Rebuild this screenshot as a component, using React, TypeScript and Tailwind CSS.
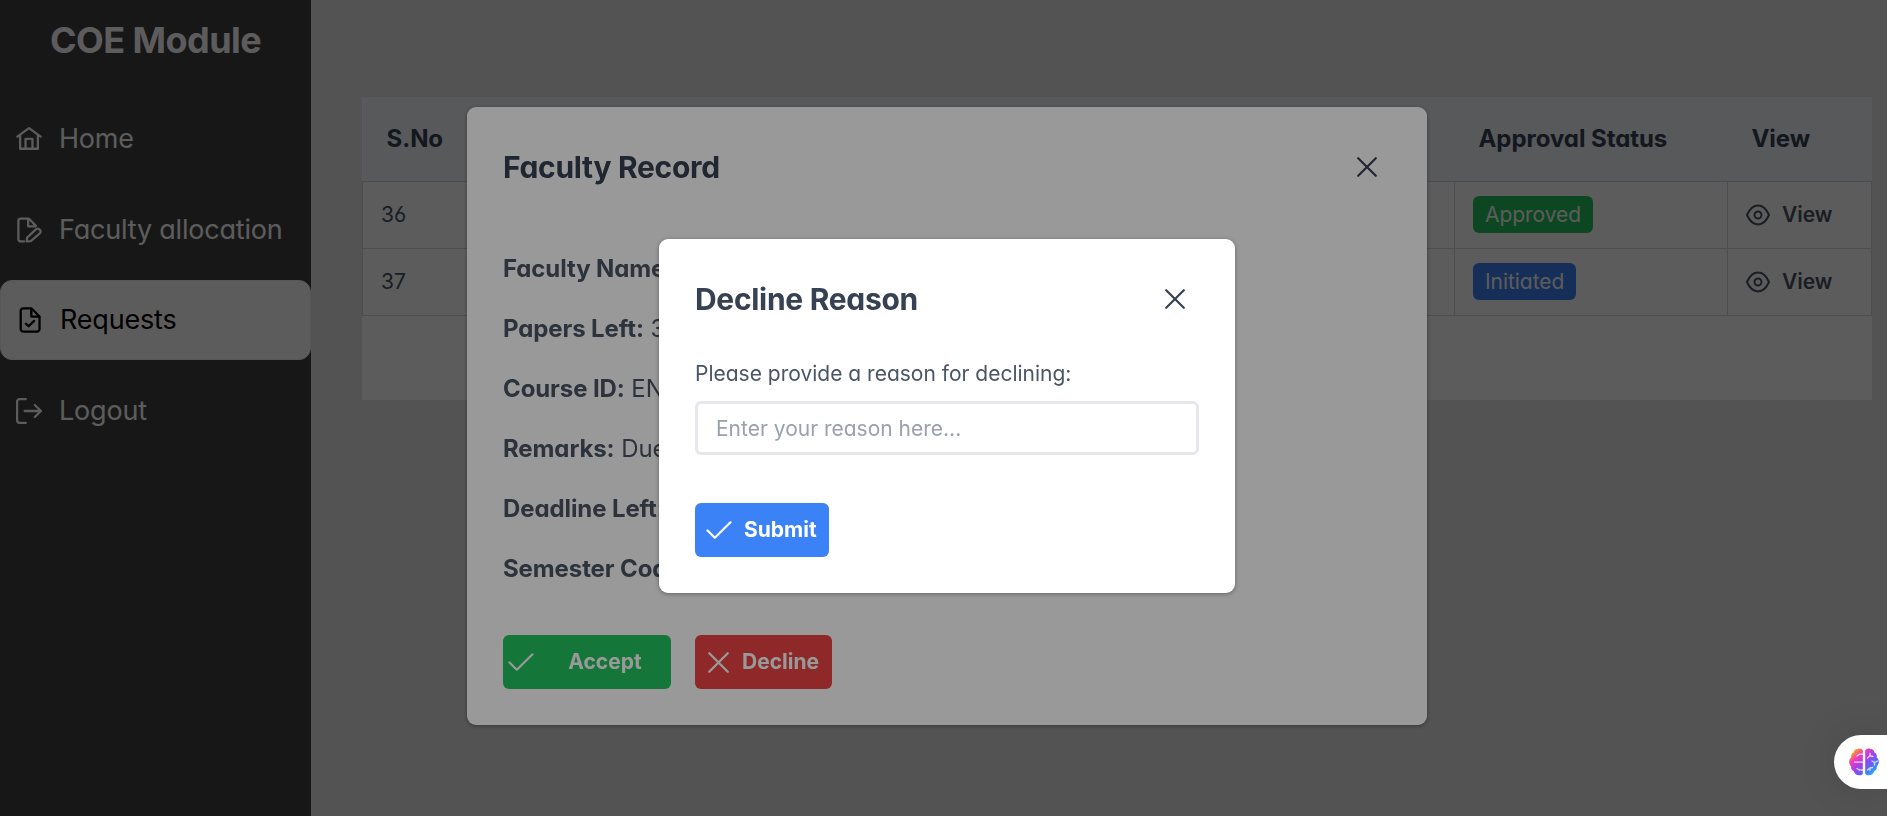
import type { ReactNode } from 'react';

type IconProps = { className?: string };

const stroke = {
  fill: 'none',
  stroke: 'currentColor',
  strokeLinecap: 'round' as const,
  strokeLinejoin: 'round' as const,
};

const HomeIcon = ({ className }: IconProps) => (
  <svg viewBox="0 0 24 24" strokeWidth="2.1" className={className} {...stroke}>
    <path d="M1.200 9.800 12 2l10.800 7.800M3.800 8.200v12.800h16.400V8.200M8.800 20.800v-9h6.400v9" />
  </svg>
);

const FileEditIcon = ({ className }: IconProps) => (
  <svg viewBox="0 0 24 24" strokeWidth="2.1" className={className} {...stroke}>
    <path d="M7.400 22.600H4.200a2 2 0 0 1-2-2V3.400a2 2 0 0 1 2-2h7.600l6.600 6.800M11.200 1.600v7h6.800M9.800 22.600l.5-3.600 8.300-7.800a1.900 1.900 0 0 1 2.700 0l.9.900a1.900 1.900 0 0 1 0 2.700l-8.500 7.400z" />
  </svg>
);

const FileCheckIcon = ({ className }: IconProps) => (
  <svg viewBox="0 0 24 24" strokeWidth="2.1" className={className} {...stroke}>
    <path d="M13.200 1.200H6a2.600 2.600 0 0 0-2.600 2.600v16.400A2.600 2.600 0 0 0 6 22.800h12.200a2.600 2.600 0 0 0 2.600-2.600V8.800zM13.200 1.200v7.600h7.600M8.200 15.400l2.600 2.400 5-5" />
  </svg>
);

const SignOutIcon = ({ className }: IconProps) => (
  <svg viewBox="0 0 24 24" strokeWidth="2.1" className={className} {...stroke}>
    <path d="M9 1H3.400A2.400 2.400 0 0 0 1 3.400v17.200A2.400 2.400 0 0 0 3.400 23H9M8 12h15M17.400 6.400 23 12l-5.600 5.600" />
  </svg>
);

const EyeIcon = ({ className }: IconProps) => (
  <svg viewBox="0 0 24 24" strokeWidth="2" className={className} {...stroke}>
    <path d="M1 12C4 5.200 8 2.600 12 2.600S20 5.200 23 12C20 18.800 16 21.400 12 21.400S4 18.800 1 12z" />
    <circle cx="12" cy="12" r="3.500" />
  </svg>
);

const CheckIcon = ({ className }: IconProps) => (
  <svg viewBox="0 0 26 26" strokeWidth="2.2" className={className} {...stroke}>
    <path d="M1.500 13.500 8.800 20.700 24.500 5.300" />
  </svg>
);

const TimesIcon = ({ className }: IconProps) => (
  <svg viewBox="0 0 20 20" strokeWidth="2.2" className={className} {...stroke}>
    <path d="M1.200 1.200 18.800 18.800M18.800 1.200 1.200 18.800" />
  </svg>
);

const BrainIcon = ({ className }: IconProps) => (
  <svg viewBox="0 0 30 28" className={className}>
    <defs>
      <linearGradient id="brain" x1="0" y1="0" x2="1" y2="1">
        <stop offset="0.12" stopColor="#fba414" />
        <stop offset="0.3" stopColor="#ee3bbd" />
        <stop offset="0.5" stopColor="#a043ea" />
        <stop offset="0.68" stopColor="#5c63f5" />
        <stop offset="0.88" stopColor="#21b0fb" />
      </linearGradient>
    </defs>
    <path
      fill="url(#brain)"
      d="M13.800 2.500C13.200.6 10.600 0 8.800 1 6.500.9 4.600 2.400 4.600 4.600 2.600 5.400 1.600 7.600 2.400 9.600.2 11-.6 14 .8 16.200c.2.900.6 1.500 1.400 2-.5 2.200.6 4.300 2.700 5C5.600 26 8 27.700 10.600 27.300c1.500.3 2.800-.5 3.200-1.800zM16.200 2.500C16.800.6 19.400 0 21.200 1c2.300-.1 4.200 1.400 4.200 3.600 2 .8 3 3 2.200 5 2.200 1.400 3 4.400 1.600 6.600-.2.900-.6 1.500-1.400 2 .5 2.200-.6 4.300-2.700 5-.7 2.800-3.100 4.500-5.700 4.100-1.500.3-2.800-.5-3.200-1.800z"
    />
    <g stroke="#ffffff" strokeOpacity=".75" strokeWidth="1.300" fill="none" strokeLinecap="round">
      <path d="M13.500 6.200h-3L8 8M13.500 14.200H5.500M13.500 22h-3L8 20.500M18.500 10l2.500-2.200 3 .7M21 7.800V5.500M23 13l2.500 1.500 3-1.500M25.500 14.500v2.500M18.500 22l2.500-2.200 2.500-.3M21 19.800v2.500" />
    </g>
  </svg>
);

function NavItem({ icon, label, active }: { icon: ReactNode; label: string; active?: boolean }) {
  return (
    <li
      className={
        active
          ? 'flex h-20 items-center rounded-xl border-[1.5px] border-[#f0f0f0] bg-white pl-4 text-black'
          : 'flex h-20 items-center pl-4 text-white'
      }
    >
      {icon}
      <span className="ml-[17px] text-[27px] leading-9 tracking-[-0.2px] whitespace-nowrap">{label}</span>
    </li>
  );
}

function Row({ no, status, tone }: { no: number; status: string; tone: string }) {
  return (
    <tr className="h-[67px] text-[21px] text-gray-600">
      <td className="border border-gray-300 px-[18px]">{no}</td>
      <td className="border border-gray-300" />
      <td className="border border-gray-300 px-[18px]">
        <span className={`inline-flex h-[37px] items-center rounded-md px-3 align-middle tracking-[-0.05px] text-white ${tone}`}>
          {status}
        </span>
      </td>
      <td className="border border-gray-300 px-[18px]">
        <span className="flex items-center gap-3 font-semibold">
          <EyeIcon className="size-6" />
          View
        </span>
      </td>
    </tr>
  );
}

function Field({ label, value }: { label: string; value: string }) {
  return (
    <p className="text-2xl leading-9 tracking-[-0.1px] text-gray-600">
      <strong className="font-bold">{label}</strong> {value}
    </p>
  );
}

function DialogHeader({ title }: { title: string }) {
  return (
    <div className="flex h-12 items-center justify-between text-gray-700">
      <h2 className="text-[30px] leading-none font-bold tracking-[-0.3px]">{title}</h2>
      <button className="flex size-12 items-center justify-center" aria-label="Close">
        <TimesIcon className="size-5" />
      </button>
    </div>
  );
}

export default function App() {
  return (
    <div
      className="flex h-[816px] w-full overflow-hidden bg-[#e5e5e5] antialiased"
      style={{ fontFamily: 'Inter, sans-serif', fontFeatureSettings: '"cv02","cv03","cv04","cv11"' }}
    >
      <aside className="w-[311px] shrink-0 bg-[#404040]">
        <h1 className="pt-4 text-center text-4xl leading-[48px] font-bold tracking-[-0.55px] text-white">COE Module</h1>
        <ul className="mt-[35px] flex flex-col gap-[10.5px]">
          <NavItem icon={<HomeIcon className="size-[26px]" />} label="Home" />
          <NavItem icon={<FileEditIcon className="size-[26px]" />} label="Faculty allocation" />
          <NavItem icon={<FileCheckIcon className="size-[26px]" />} label="Requests" active />
          <NavItem icon={<SignOutIcon className="size-[26px]" />} label="Logout" />
        </ul>
      </aside>

      <main className="flex-1 pt-[97px] pr-[15px] pl-[51px]">
        <div className="h-[303px] bg-white">
          <table className="w-full table-fixed border-collapse text-left">
            <colgroup>
              <col className="w-[200px]" />
              <col />
              <col className="w-[273px]" />
              <col className="w-[144px]" />
            </colgroup>
            <thead>
              <tr className="h-[84px] bg-[#f1f5f9] text-2xl tracking-[-0.05px] text-gray-700">
                <th className="px-6 font-bold">S.No</th>
                <th />
                <th className="px-6 font-bold">Approval Status</th>
                <th className="px-6 font-bold">View</th>
              </tr>
            </thead>
            <tbody>
              <Row no={36} status="Approved" tone="bg-[#22c55e]" />
              <Row no={37} status="Initiated" tone="bg-[#3b82f6]" />
            </tbody>
          </table>
        </div>
      </main>

      <div className="fixed inset-0 flex items-center justify-center bg-black/40 pt-4 pl-[7px]">
        <section className="h-[618px] w-[960px] rounded-[9px] bg-white p-9 shadow-[0_1px_4px_rgba(0,0,0,0.35)]">
          <DialogHeader title="Faculty Record" />
          <div className="mt-[60px] flex flex-col gap-6">
            <Field label="Faculty Name:" value="" />
            <Field label="Papers Left:" value="3" />
            <Field label="Course ID:" value="EN" />
            <Field label="Remarks:" value="Due" />
            <Field label="Deadline Left:" value="" />
            <Field label="Semester Code:" value="" />
          </div>
          <div className="mt-12 flex gap-6 text-[21px] font-bold text-white">
            <button className="flex h-[54px] w-[168px] items-center rounded-md bg-[#22c55e] pl-[5px]">
              <CheckIcon className="size-[26px]" />
              <span className="flex-1 pl-[5px] text-center">Accept</span>
            </button>
            <button className="flex h-[54px] w-[137px] items-center rounded-md bg-[#ef4444] pl-[13px]">
              <TimesIcon className="size-[21px]" />
              <span className="pl-[13px]">Decline</span>
            </button>
          </div>
        </section>
      </div>

      <div className="fixed inset-0 flex items-center justify-center bg-black/40 pt-4 pl-[7px]">
        <section className="h-[354px] w-[576px] rounded-[9px] bg-white p-9 shadow-[0_1px_4px_rgba(0,0,0,0.35)]">
          <DialogHeader title="Decline Reason" />
          <label className="mt-9 block text-[21px] leading-[30px] text-gray-600">Please provide a reason for declining:</label>
          <input
            className="mt-3 h-[54px] w-full rounded-md border-[3px] border-gray-200 px-[18px] text-[21px] text-gray-700 placeholder:text-gray-400"
            placeholder="Enter your reason here..."
          />
          <button className="mt-12 flex h-[54px] w-[134px] items-center rounded-md bg-[#3b82f6] pl-[11px] text-[21px] font-bold text-white">
            <CheckIcon className="size-[26px]" />
            <span className="pl-3">Submit</span>
          </button>
        </section>
      </div>

      <div className="fixed right-0 bottom-[27px] flex h-[54px] w-[53px] items-center rounded-l-full bg-white pl-[15px] shadow-[0_0_40px_rgba(0,0,0,0.12)]">
        <BrainIcon className="h-7 w-[30px]" />
      </div>
    </div>
  );
}
